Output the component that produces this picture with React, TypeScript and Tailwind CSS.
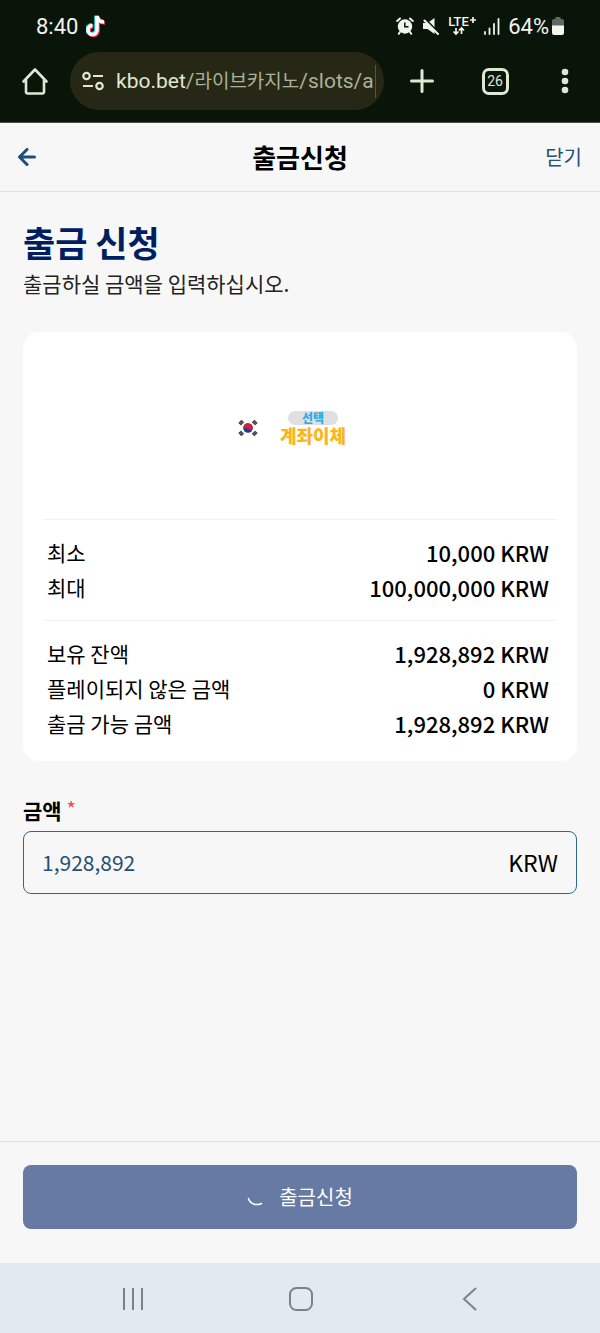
import React, { useState } from 'react';

interface Row {
  label: string;
  value: string;
}

const limits: Row[] = [
  { label: '최소', value: '10,000 KRW' },
  { label: '최대', value: '100,000,000 KRW' },
];

const balances: Row[] = [
  { label: '보유 잔액', value: '1,928,892 KRW' },
  { label: '플레이되지 않은 금액', value: '0 KRW' },
  { label: '출금 가능 금액', value: '1,928,892 KRW' },
];

const TikTokIcon = () => (
  <svg width="20" height="23" viewBox="0 0 20 23" fill="none" strokeWidth="4">
    <path d="M11 1v14a4.500 4.500 0 1 1-4.500-4.500M11 1c.5 3.500 3 6 7 6" stroke="#25d9d5" transform="translate(-.8 -.5)" />
    <path d="M11 1v14a4.500 4.500 0 1 1-4.500-4.500M11 1c.5 3.500 3 6 7 6" stroke="#ee2b55" transform="translate(1 .8)" />
    <path d="M11 1v14a4.500 4.500 0 1 1-4.500-4.500M11 1c.5 3.500 3 6 7 6" stroke="#fff" strokeWidth="3.600" />
  </svg>
);

const AlarmIcon = () => (
  <svg width="18" height="18" viewBox="0 0 18 18" fill="none">
    <circle cx="9" cy="9.500" r="7.200" fill="#f1f3ee" />
    <path d="M1.200 4 4 1.500M16.800 4 14 1.500M4 15l-1.200 1.800M14 15l1.200 1.800" stroke="#f1f3ee" strokeWidth="2" strokeLinecap="round" />
    <path d="M8.800 5.500v4.300h3.700" stroke="#0a150a" strokeWidth="1.500" />
  </svg>
);

const MuteIcon = () => (
  <svg width="18" height="18" viewBox="0 0 18 18">
    <path d="M1 6h4.500L12.500 1v16l-7-5H1z" fill="#f1f3ee" />
    <path d="M1 0 18 17" stroke="#0a150a" strokeWidth="2" />
    <path d="M2.500 3.500 16 17" stroke="#f1f3ee" strokeWidth="2" strokeLinecap="round" />
  </svg>
);

const SignalIcon = () => (
  <svg width="16" height="17" viewBox="0 0 16 17" stroke="#f1f3ee" strokeWidth="1.800" strokeLinecap="round">
    <path d="M1 14v2M5.500 10.500V16M10 6v10M14.500 1v15" />
  </svg>
);

const BatteryIcon = () => (
  <svg width="12" height="18" viewBox="0 0 12 18">
    <path d="M3.500 0h5v2H10a2 2 0 0 1 2 2v5H0V4a2 2 0 0 1 2-2h1.500z" fill="#62685f" />
    <path d="M0 8.500h12V16a2 2 0 0 1-2 2H2a2 2 0 0 1-2-2z" fill="#f5f7f2" />
  </svg>
);

const LteIcon = () => (
  <div className="relative h-5 w-7 text-[13px] leading-3 font-medium">
    LTE
    <svg className="absolute inset-0" width="28" height="20" viewBox="0 0 28 20" fill="none" stroke="#f1f3ee" strokeWidth="1.700">
      <path d="M22 4h6M25 1v6M8 12v6M5.500 15.500 8 18l2.500-2.500M13.500 18v-6M11 14.500l2.500-2.500 2.500 2.500" />
    </svg>
  </div>
);

const FlagIcon = () => (
  <svg width="20" height="18" viewBox="0 0 20 18">
    <g stroke="#3d3d3d" strokeWidth="3.800" strokeDasharray="1.500 .2">
      <path d="M1.700 5.200 4.800 2M15.200 2l3.100 3.200M1.700 12.800 4.800 16M15.200 16l3.100-3.200" />
    </g>
    <circle cx="10" cy="9" r="4.800" fill="#1f3c92" />
    <path d="M6.100 6.200a4.800 4.800 0 0 1 8.600 3.600c-1.200 1.600-3.100 1.400-4.400.1-1.300-1.200-3.500-1-5-.2a4.800 4.800 0 0 1 .8-3.500z" fill="#d2203b" />
  </svg>
);

const StatusBar = () => (
  <div className="flex h-[52px] items-center justify-between px-9 text-[22px] text-[#f1f3ee]">
    <div className="flex items-center gap-2">
      <span>8:40</span>
      <TikTokIcon />
    </div>
    <div className="flex items-center gap-2">
      <AlarmIcon />
      <MuteIcon />
      <LteIcon />
      <SignalIcon />
      <div className="flex items-center gap-[3px]">
        <span>64%</span>
        <BatteryIcon />
      </div>
    </div>
  </div>
);

const BrowserBar = () => (
  <div className="flex h-[58px] items-center pr-5 text-[#dfe8d3]">
    <button aria-label="홈" className="flex w-[70px] justify-center">
      <svg width="28" height="28" viewBox="0 0 28 28" fill="none" stroke="currentColor" strokeWidth="2.600" strokeLinejoin="round" strokeLinecap="round">
        <path d="M2.500 14.500 14 2.500l11.500 12M5 12.500V25a1.500 1.500 0 0 0 1.500 1.500h15A1.500 1.500 0 0 0 23 25V12.500" />
      </svg>
    </button>
    <div className="flex h-full min-w-0 flex-1 items-center gap-3 rounded-full bg-[#262815] pr-2 pl-3">
      <svg className="shrink-0" width="22" height="20" viewBox="0 0 22 20" fill="none" stroke="currentColor" strokeWidth="2.200">
        <circle cx="4.500" cy="5" r="3.200" />
        <path d="M11 5h10M1 15h10" />
        <circle cx="17.500" cy="15" r="3.200" />
      </svg>
      <div className="min-w-0 flex-1 overflow-hidden border-r border-[#55583f] text-[21px] leading-8 whitespace-nowrap text-[#aab399]">
        <span className="text-[#dfe8d3]">kbo.bet</span>/<span className="text-[19px]">라이브카지노</span>/slots/a
      </div>
    </div>
    <div className="ml-[26px] flex w-[170px] items-center justify-between">
      <button aria-label="새 탭">
        <svg width="24" height="24" viewBox="0 0 24 24" stroke="currentColor" strokeWidth="3" strokeLinecap="round">
          <path d="M12 1.500v21M1.500 12h21" />
        </svg>
      </button>
      <button aria-label="탭 목록" className="ml-2 flex size-[27px] items-center justify-center rounded-[7px] border-[3px] border-[#dfe8d3] text-[14px] leading-none">
        26
      </button>
      <button aria-label="메뉴" className="flex w-8 justify-end pr-[11px]">
        <svg width="8" height="26" viewBox="0 0 8 26" fill="currentColor">
          <circle cx="4" cy="4" r="3.300" />
          <circle cx="4" cy="13" r="3.300" />
          <circle cx="4" cy="22" r="3.300" />
        </svg>
      </button>
    </div>
  </div>
);

const RowList: React.FC<{ rows: Row[] }> = ({ rows }) => (
  <dl className="border-t border-[#f3f3f3] py-[15px] pr-2 pl-1">
    {rows.map((row) => (
      <div key={row.label} className="flex justify-between leading-[35px]">
        <dt className="text-[21px]">{row.label}</dt>
        <dd className="text-[22px] font-medium">{row.value}</dd>
      </div>
    ))}
  </dl>
);

export default function App() {
  const [amount, setAmount] = useState('1,928,892');

  return (
    <div className="flex min-h-screen flex-col bg-[#f7f7f7] font-['Noto_Sans_CJK_KR',sans-serif] text-black">
      <div className="border-b border-[#4a5046] bg-[#0a150a] pb-3 font-[Roboto,'Noto_Sans_CJK_KR',sans-serif]">
        <StatusBar />
        <BrowserBar />
      </div>

      {/* Header */}
      <header className="grid h-[69px] grid-cols-3 items-center border-b border-[#e2e2e2] px-[18px]">
        <button aria-label="뒤로" className="text-[#1f4e79]">
          <svg width="18" height="18" viewBox="0 0 18 18" fill="none" stroke="currentColor" strokeWidth="3" strokeLinecap="round" strokeLinejoin="round">
            <path d="M9 1.500 1.500 9 9 16.500M1.500 9h15" />
          </svg>
        </button>
        <h2 className="pb-0.5 text-center text-[26px] font-bold">출금신청</h2>
        <button className="justify-self-end text-[20px] text-[#26507a]">닫기</button>
      </header>

      <main className="flex-1 px-[23px] pt-[26px]">
        <h1 className="text-[35px] leading-[48px] font-bold text-[#001f60]">출금 신청</h1>
        <p className="text-[21px] leading-[35px] text-[#222]">출금하실 금액을 입력하십시오.</p>

        <section className="mt-[31px] rounded-2xl bg-white px-5 pb-[5px]">
          <div className="flex h-[187px] items-center justify-center gap-[22px] pt-1 pr-4">
            <FlagIcon />
            <div className="flex flex-col items-center">
              <span className="rounded-full bg-[#dfe0e2] px-[14px] text-[12px] leading-[14px] font-black text-[#35a8e6]">선택</span>
              <span className="text-[18px] leading-5 font-black text-[#f9b51b]">계좌이체</span>
            </div>
          </div>
          <RowList rows={limits} />
          <RowList rows={balances} />
        </section>

        {/* Amount */}
        <label htmlFor="amount" className="mt-8 mb-[3px] block h-[35px] text-[21px] leading-[35px] font-bold">
          금액 <span className="align-top text-[20px] leading-8 font-normal text-[#f0444f]">*</span>
        </label>
        <div className="flex h-[63px] items-center rounded-lg border border-[#2f6793] px-[18px]">
          <input
            id="amount"
            value={amount}
            onChange={(e) => setAmount(e.target.value)}
            className="min-w-0 flex-1 text-[21px] text-[#264d75] outline-none"
          />
          <span className="text-[23px]">KRW</span>
        </div>
      </main>

      <footer className="border-t border-[#e2e2e2] px-[23px] pt-[23px] pb-[34px]">
        <button className="flex h-16 w-full items-center justify-center gap-4 rounded-lg bg-[#667aa4] text-[20px] text-white">
          <svg className="mt-1" width="16" height="16" viewBox="0 0 16 16" fill="none" stroke="currentColor" strokeWidth="1.500" strokeLinecap="round">
            <path d="M1.500 7.500c1.500 5.500 8 7.500 13 5" />
          </svg>
          출금신청
        </button>
      </footer>

      <nav className="flex h-[70px] items-center justify-around bg-[#e2e9f1] pt-0.5 pr-[46px] pl-[49px] text-[#7d8287]">
        <button aria-label="최근 앱">
          <svg width="24" height="24" viewBox="0 0 24 24" stroke="currentColor" strokeWidth="2">
            <path d="M3 1v22M12 1v22M21 1v22" />
          </svg>
        </button>
        <button aria-label="홈 화면">
          <svg width="24" height="24" viewBox="0 0 24 24" fill="none" stroke="currentColor" strokeWidth="2">
            <rect x="1" y="1" width="22" height="22" rx="6.500" />
          </svg>
        </button>
        <button aria-label="이전">
          <svg width="24" height="24" viewBox="0 0 24 24" fill="none" stroke="currentColor" strokeWidth="2">
            <path d="M18 1 6 12l12 11" />
          </svg>
        </button>
      </nav>
    </div>
  );
}
